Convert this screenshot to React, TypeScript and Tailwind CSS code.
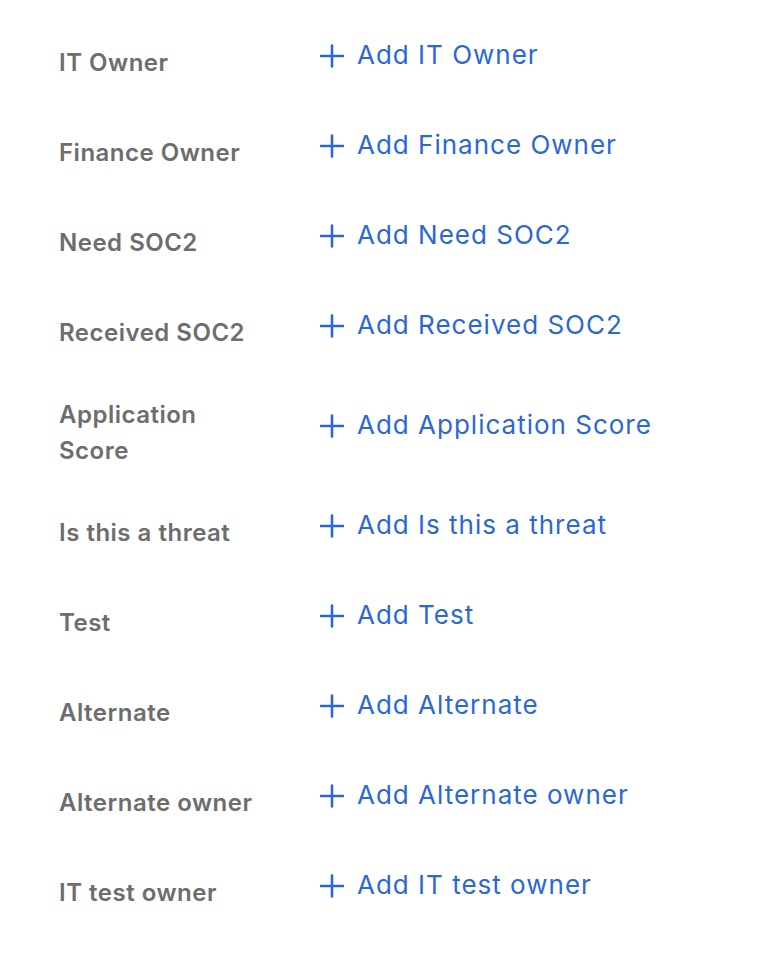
import React from "react";

const rows = [
  "IT Owner",
  "Finance Owner",
  "Need SOC2",
  "Received SOC2",
  "Application Score",
  "Is this a threat",
  "Test",
  "Alternate",
  "Alternate owner",
  "IT test owner",
];

function Plus() {
  return (
    <svg width="24" height="24" viewBox="0 0 24 24" className="mt-[3px] shrink-0">
      <path d="M12 1.5V22.5M1 12H23" stroke="#2b67d6" strokeWidth="2.6" strokeLinecap="round" />
    </svg>
  );
}

export default function App() {
  return (
    <div
      className="min-h-[978px] w-[778px] bg-white pl-[59px] pt-[32px]"
      style={{ fontFamily: "Inter, 'Noto Sans', sans-serif" }}
    >
      <div className="flex flex-col gap-[28px]">
        {rows.map((r) => (
          <div key={r} className="flex items-center">
            <div className="w-[205px] py-[5px] text-[24px] font-semibold leading-[36px] tracking-[0.5px] text-[#6d6d6d]">
              {r}
            </div>
            <div className="ml-[56px] flex h-[62px] items-start pb-[16px]">
              <button className="flex h-[44px] items-center gap-[13px] text-[26px] tracking-[1px] text-[#2b67d6]">
                <Plus />
                <span>Add {r}</span>
              </button>
            </div>
          </div>
        ))}
      </div>
    </div>
  );
}
